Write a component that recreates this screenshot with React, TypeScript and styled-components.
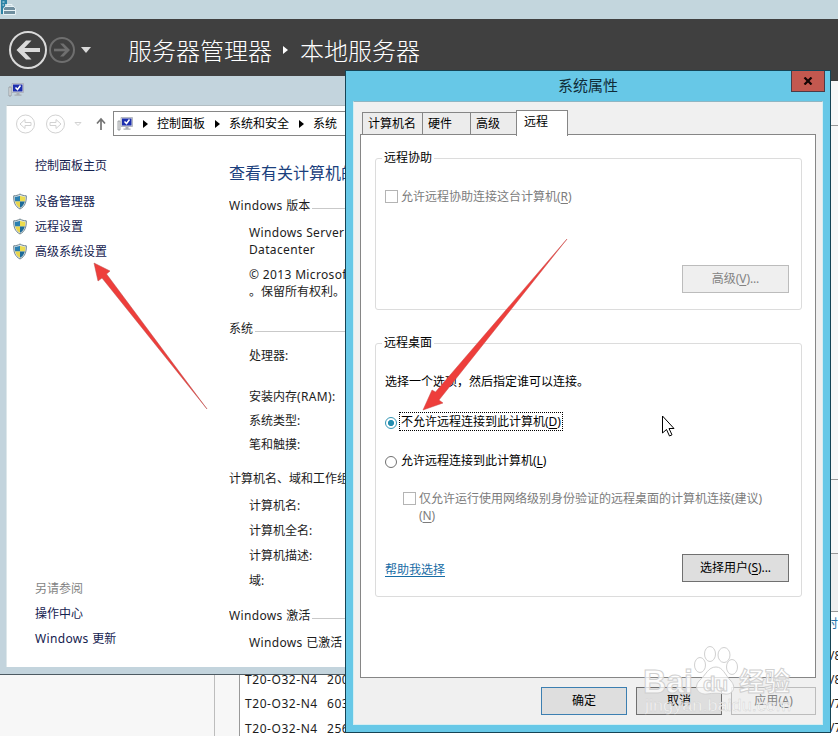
import React from "react";
import styled, { createGlobalStyle, css } from "styled-components";

const Global = createGlobalStyle`
  * { box-sizing: border-box; }
  html, body { margin: 0; padding: 0; overflow: hidden; }
  body { font: 12px/16px "Noto Sans", "Noto Sans CJK SC", sans-serif; color: #1c1c1c; }
  button { font: inherit; }
`;

const Desktop = styled.div`
  position: relative;
  width: 838px;
  height: 736px;
  overflow: hidden;
  background: #fff;
`;

/* Server manager */
const Manager = styled.div`
  display: flex;
  flex-direction: column;
  height: 100%;
`;
const ManagerTitle = styled.div`
  height: 19px;
  flex: none;
  background: #c3d6dd;
`;
const ManagerNav = styled.div`
  height: 62px;
  flex: none;
  background: #404040;
  display: flex;
  align-items: flex-start;
  color: #fff;
`;
const NavIcons = styled.svg`
  width: 128px;
  height: 62px;
  display: block;
`;
const Crumb = styled.div`
  display: flex;
  align-items: center;
  height: 62px;
  font: 300 24px/32px "Noto Sans CJK SC", sans-serif;
  svg { margin: 0 11px 1px 11px; }
`;
const ManagerBody = styled.div`
  flex: 1;
  display: grid;
  grid-template-columns: 215px 24px 1fr 16px;
`;
const NavPane = styled.div`
  background: #f7f7f7;
  border-right: 1px solid #bdbdbd;
`;
const Gutter = styled.div`
  background: #f7f7f7;
`;
const EventTable = styled.div`
  border-left: 1px solid #999;
  padding: 587px 0 0 5px;
  overflow: hidden;
  height: 655px;
`;
const EventRow = styled.div`
  display: grid;
  grid-template-columns: 82px 60px;
  height: 24.3px;
  line-height: 24px;
  letter-spacing: 0.55px;
  white-space: nowrap;
`;
const EdgeColumn = styled.div`
  display: flex;
  flex-direction: column;
  overflow: hidden;
  height: 655px;
`;
const EdgePanel = styled.div<{ $h: number; $bg: string }>`
  height: ${(p) => p.$h}px;
  flex: none;
  background: ${(p) => p.$bg};
  border-bottom: 1px solid #999;
`;
const EdgeText = styled.div<{ $link?: boolean }>`
  height: ${(p) => (p.$link ? 32 : 24)}px;
  flex: none;
  line-height: 24px;
  padding-left: ${(p) => (p.$link ? 4 : 8)}px;
  white-space: nowrap;
  color: ${(p) => (p.$link ? "#2372a8" : "#1c1c1c")};
`;

/* Control panel window */
const Panel = styled.section`
  position: absolute;
  left: 0;
  top: 76px;
  width: 346px;
  height: 599px;
  background: #c3d4dd;
  border-bottom: 1px solid #4d5a62;
  padding: 0 0 7px 6px;
  display: flex;
  flex-direction: column;
`;
const PanelTitle = styled.div`
  height: 29px;
  flex: none;
  padding: 6px 0 0 2px;
`;
const PanelClient = styled.div`
  flex: 1;
  background: #fff;
  border-top: 1px solid #b3bec3;
  border-left: 1px solid #dde7ea;
  display: flex;
  flex-direction: column;
  min-height: 0;
`;
const AddressRow = styled.div`
  display: flex;
  height: 31px;
  flex: none;
  padding-top: 5px;
`;
const AddressNav = styled.svg`
  width: 106px;
  height: 26px;
  flex: none;
`;
const Address = styled.div`
  flex: 1;
  height: 25px;
  border: 1px solid #868686;
  border-right: 0;
  display: flex;
  align-items: center;
  padding-left: 3px;
  white-space: nowrap;
  overflow: hidden;
  color: #000;
  svg { flex: none; }
`;
const Seg = styled.span`
  line-height: 23px;
`;
const Sep = styled.svg`
  width: 5px;
  height: 8px;
  margin: 0 9px 0 10px;
  &:first-of-type { margin-left: 8px; }
`;
const Columns = styled.div`
  flex: 1;
  display: grid;
  grid-template-columns: 222px 1fr;
  min-height: 0;
`;
const Side = styled.nav`
  padding: 21px 0 0 28px;
`;
const SideLink = styled.div<{ $mt?: number; $muted?: boolean }>`
  height: 16px;
  margin-top: ${(p) => p.$mt ?? 9}px;
  display: flex;
  align-items: center;
  white-space: pre;
  color: ${(p) => (p.$muted ? "#838383" : "#15224f")};
`;
const Latin = styled.span`
  letter-spacing: 0.35px;
`;
const ShieldSvg = styled.svg`
  width: 16px;
  height: 17px;
  margin: -2px 7px 0 -23px;
`;
const Info = styled.div`
  padding-top: 24px;
  overflow: hidden;
`;
const Heading = styled.h1`
  margin: 0;
  font-size: 16px;
  line-height: 24px;
  font-weight: 400;
  color: #1b3f7d;
  white-space: nowrap;
`;
const Section = styled.div<{ $mt: number }>`
  display: flex;
  align-items: center;
  height: 16px;
  margin-top: ${(p) => p.$mt}px;
  white-space: pre;
  &::after {
    content: "";
    flex: 1;
    height: 1px;
    margin: 5px 0 0 2px;
    background: #c9c9c9;
  }
`;
const Item = styled.div<{ $mt: number }>`
  height: 16px;
  margin-top: ${(p) => p.$mt}px;
  padding-left: 20px;
  white-space: nowrap;
`;

/* System properties dialog */
const Dialog = styled.section`
  position: absolute;
  left: 345px;
  top: 70px;
  width: 486px;
  height: 663px;
  background: #67c8e7;
  border: 1px solid #164455;
  display: flex;
  flex-direction: column;
  padding: 0 7px 7px;
`;
const DialogTitle = styled.header`
  position: relative;
  height: 30px;
  flex: none;
  text-align: center;
  font-size: 15px;
  line-height: 29px;
  color: #102c38;
`;
const Close = styled.button`
  position: absolute;
  right: -2px;
  top: 0;
  width: 34px;
  height: 21px;
  border: 1px solid #4c3b47;
  border-top: 0;
  background: #c3584f;
  padding: 0;
  display: grid;
  place-items: center;
`;
const DialogBody = styled.div`
  flex: 1;
  background: #f0f0f0;
  border: 1px solid #d4eef2;
  border-top-color: #8fb6c3;
  padding: 8px 6px 0 6px;
  display: flex;
  flex-direction: column;
`;
const Tabs = styled.div`
  display: flex;
  align-items: flex-end;
  height: 25px;
  padding-left: 2px;
  margin-bottom: -1px;
  color: #000;
`;
const Tab = styled.div<{ $w: number; $active?: boolean }>`
  width: ${(p) => p.$w}px;
  height: 23px;
  line-height: 22px;
  padding-left: 5px;
  border: 1px solid #868686;
  margin-right: -1px;
  background: #ececec;
  white-space: nowrap;
  ${(p) =>
    p.$active &&
    css`
      height: 26px;
      margin-bottom: -1px;
      padding-left: 7px;
      background: #fff;
      border-bottom: 0;
      position: relative;
      z-index: 1;
    `}
`;
const Page = styled.div`
  height: 544px;
  flex: none;
  border: 1px solid #868686;
  background: #fff;
  padding: 15px 13px 0 14px;
  color: #000;
`;
const Group = styled.fieldset<{ $h: number; $mt?: number }>`
  margin: ${(p) => p.$mt ?? 0}px 0 0;
  padding: 0 12px 0 9px;
  min-width: 0;
  height: ${(p) => p.$h}px;
  border: 1px solid #dcdcdc;
  border-radius: 3px;
`;
const Legend = styled.legend`
  padding: 0 2px;
  margin-left: -3px;
  height: 16px;
`;
const Option = styled.div<{ $mt: number; $indent?: number; $muted?: boolean }>`
  display: flex;
  align-items: flex-start;
  margin-top: ${(p) => p.$mt}px;
  padding-left: ${(p) => p.$indent ?? 0}px;
  line-height: 17px;
  color: ${(p) => (p.$muted ? "#7c7c7c" : "#000")};
  white-space: nowrap;
`;
const Check = styled.span`
  width: 13px;
  height: 13px;
  flex: none;
  border: 1px solid #b4b4b4;
  margin: 2px 3px 0 0;
`;
const Radio = styled.span<{ $on?: boolean }>`
  width: 12px;
  height: 12px;
  flex: none;
  border-radius: 50%;
  border: 1px solid ${(p) => (p.$on ? "#3596b5" : "#707070")};
  background: ${(p) =>
    p.$on ? "radial-gradient(circle, #258eb0 0 2.7px, #fff 3.5px)" : "#fff"};
  margin: 4px 3px 0 0;
`;
const OptionLabel = styled.span<{ $focus?: boolean }>`
  padding: 0 1px;
  outline: ${(p) => (p.$focus ? "1px dotted #000" : "none")};
`;
const Key = styled.span`
  letter-spacing: -0.1px;
  u { text-underline-offset: 2px; }
`;
const Hint = styled.div`
  margin-top: 23px;
  height: 16px;
`;
const Foot = styled.div<{ $mt: number }>`
  display: flex;
  justify-content: space-between;
  align-items: center;
  margin-top: ${(p) => p.$mt}px;
`;
const Help = styled.a`
  color: #176ca5;
  padding-top: 3px;
  text-decoration: underline;
  text-underline-offset: 2px;
`;
const Button = styled.button<{ $w: number; $tone?: "primary" | "disabled" }>`
  width: ${(p) => p.$w}px;
  height: 28px;
  padding: 0 0 1px;
  border: 1px solid
    ${(p) => (p.$tone === "primary" ? "#3c7fb1" : p.$tone === "disabled" ? "#bcbcbc" : "#707070")};
  background: ${(p) => (p.$tone === "disabled" ? "#efefef" : "#dedede")};
  color: ${(p) => (p.$tone === "disabled" ? "#838383" : "#000")};
`;
const Actions = styled.div`
  display: flex;
  justify-content: flex-end;
  gap: 9px;
  margin-top: 9px;
`;

/* Annotations drawn above the windows */
const Overlay = styled.svg`
  position: absolute;
  inset: 0;
  pointer-events: none;
`;

const Computer = () => (
  <svg width="16" height="16" viewBox="0 0 16 16">
    <path d="M1 5h2v9H1z" fill="#eee" stroke="#8a8f96" strokeWidth=".8" />
    <path d="M4 1.5h11.5v9H4z" fill="#d8dae0" stroke="#a7abb5" strokeWidth=".8" />
    <path d="M5 2.5h9.500v7H5z" fill="#1c2fae" />
    <path d="M7.500 5.500l2 2 3-4" fill="none" stroke="#fff" strokeWidth="1.500" />
    <path d="M8.500 11h3v1.500h2v1.300H6.500v-1.300h2z" fill="#a9adb3" />
  </svg>
);

const Shield = () => (
  <ShieldSvg viewBox="0 0 16 17">
    <path d="M8 1c2 1.300 4 1.700 6.300 1.800C14.500 9 13 13.500 8 16 3 13.500 1.500 9 1.700 2.800 4 2.700 6 2.300 8 1z" fill="#e0e7ea" stroke="#70858f" />
    <path d="M8 2.800v5.700H3.200c-.4-1.500-.5-3-.4-4.700C4.700 3.700 6.500 3.500 8 2.800z" fill="#2a7fb0" />
    <path d="M8 2.800v5.700h4.800c.4-1.500.5-3 .4-4.700C11.300 3.700 9.500 3.500 8 2.800z" fill="#ecdc4e" />
    <path d="M8 8.500H3.200c.8 3 2.300 5 4.800 6.300z" fill="#e9d54a" />
    <path d="M8 8.500h4.800c-.8 3-2.300 5-4.800 6.300z" fill="#1d6a98" />
  </ShieldSvg>
);

const Arrow = () => (
  <Sep viewBox="0 0 5 8">
    <path d="M0 0l5 4-5 4z" fill="#000" />
  </Sep>
);

const Mn = ({ k, dots }: { k: string; dots?: boolean }) => (
  <Key>
    (<u>{k}</u>){dots && "..."}
  </Key>
);

const events = [
  ["T20-O32-N4", "2003"],
  ["T20-O32-N4", "6038"],
  ["T20-O32-N4", "2561"],
];
const edgeDates = ["/8", "/8", "/7", "/7"];

export default function App() {
  return (
    <Desktop>
      <Global />
      <Manager>
        <ManagerTitle>
          <svg width="17" height="16" viewBox="0 0 17 16">
            <path d="M0 0h7v4H5v10H1V0z" fill="#2b83a5" />
            <path d="M2.500 2h2M2.500 5h1.500" stroke="#d9f0f5" />
            <path d="M3.500 8.500l1.500-2h9l1.500 2v6h-12z" fill="#6f8f9f" stroke="#e8f3f6" />
            <path d="M7 6.500V4.500h5v2M4 10.500h11" fill="none" stroke="#e8f3f6" />
          </svg>
        </ManagerTitle>
        <ManagerNav>
          <NavIcons viewBox="0 0 128 62">
            <circle cx="28" cy="31" r="18" fill="none" stroke="#dadada" strokeWidth="2" />
            <path d="M40 31H20" fill="none" stroke="#dadada" strokeWidth="4" />
            <path d="M26 21.500h5.500L22.500 31l9 9.500H26L16.500 31z" fill="#dadada" />
            <circle cx="62" cy="31" r="12" fill="none" stroke="#6f6f6f" strokeWidth="2" />
            <path d="M54 31h13" fill="none" stroke="#6f6f6f" strokeWidth="2.600" />
            <path d="M63.500 24.500H60l6 6.500-6 6.500h3.500l6.500-6.500z" fill="#6f6f6f" />
            <path d="M81 28h10l-5 6z" fill="#dadada" />
          </NavIcons>
          <Crumb>
            服务器管理器
            <svg width="6" height="8" viewBox="0 0 6 8">
              <path d="M0 0l5 4-5 4z" fill="#fff" />
            </svg>
            本地服务器
          </Crumb>
        </ManagerNav>
        <ManagerBody>
          <NavPane />
          <Gutter />
          <EventTable>
            {events.map(([name, id]) => (
              <EventRow key={id}>
                <span>{name}</span>
                <span>{id}</span>
              </EventRow>
            ))}
          </EventTable>
          <EdgeColumn>
            <EdgePanel $h={45} $bg="#f7f7f7" />
            <EdgePanel $h={354} $bg="#f7f7f7" />
            <EdgePanel $h={74} $bg="#f7f7f7" />
            <EdgePanel $h={58} $bg="#efefef" />
            <EdgeText $link>时</EdgeText>
            {edgeDates.map((d, i) => (
              <EdgeText key={i}>{d}</EdgeText>
            ))}
          </EdgeColumn>
        </ManagerBody>
      </Manager>

      <Panel>
        <PanelTitle>
          <Computer />
        </PanelTitle>
        <PanelClient>
          <AddressRow>
            <AddressNav viewBox="0 0 106 26">
              <g fill="none" stroke="#d2d2d2">
                <circle cx="18.500" cy="13" r="9" />
                <path d="M24 11.500h-6v-3l-5 4.500 5 4.500v-3h6z" />
                <circle cx="48.500" cy="13" r="9" />
                <path d="M43 11.500h6v-3l5 4.500-5 4.500v-3h-6z" />
                <path d="M68 11.500h6l-3 3z" />
                <path d="M94 19V9M90 12.500L94 8l4 4.500" stroke="#737373" strokeWidth="1.700" />
              </g>
            </AddressNav>
            <Address>
              <Computer />
              <Arrow />
              <Seg>控制面板</Seg>
              <Arrow />
              <Seg>系统和安全</Seg>
              <Arrow />
              <Seg>系统</Seg>
            </Address>
          </AddressRow>
          <Columns>
            <Side>
              <SideLink $mt={0}>控制面板主页</SideLink>
              <SideLink $mt={20}><Shield />设备管理器</SideLink>
              <SideLink><Shield />远程设置</SideLink>
              <SideLink><Shield />高级系统设置</SideLink>
              <SideLink $mt={321} $muted>另请参阅</SideLink>
              <SideLink>操作中心</SideLink>
              <SideLink><Latin>Windows </Latin>更新</SideLink>
            </Side>
            <Info>
              <Heading>查看有关计算机的基本信息</Heading>
              <Section $mt={13}><Latin>Windows </Latin>版本</Section>
              <Item $mt={11}><Latin>Windows Server</Latin></Item>
              <Item $mt={1}><Latin>Datacenter</Latin></Item>
              <Item $mt={9}><Latin>© 2013 Microsoft</Latin></Item>
              <Item $mt={1}>。保留所有权利。</Item>
              <Section $mt={21}>系统</Section>
              <Item $mt={11}>处理器:</Item>
              <Item $mt={25}>安装内存<Latin>(RAM):</Latin></Item>
              <Item $mt={8}>系统类型:</Item>
              <Item $mt={8}>笔和触摸:</Item>
              <Section $mt={18}>计算机名、域和工作组设置</Section>
              <Item $mt={11}>计算机名:</Item>
              <Item $mt={9}>计算机全名:</Item>
              <Item $mt={9}>计算机描述:</Item>
              <Item $mt={9}>域:</Item>
              <Section $mt={19}><Latin>Windows </Latin>激活</Section>
              <Item $mt={11}><Latin>Windows </Latin>已激活</Item>
            </Info>
          </Columns>
        </PanelClient>
      </Panel>

      <Dialog>
        <DialogTitle>
          系统属性
          <Close aria-label="关闭">
            <svg width="10" height="8" viewBox="0 0 10 8">
              <path d="M1.500 .5l7 7M8.500 .5l-7 7" stroke="#150505" strokeWidth="2.200" />
            </svg>
          </Close>
        </DialogTitle>
        <DialogBody>
          <Tabs>
            <Tab $w={61}>计算机名</Tab>
            <Tab $w={49}>硬件</Tab>
            <Tab $w={47}>高级</Tab>
            <Tab $w={52} $active>远程</Tab>
          </Tabs>
          <Page>
            <Group $h={160}>
              <Legend>远程协助</Legend>
              <Option $mt={22} $muted>
                <Check />
                <span>允许远程协助连接这台计算机<Mn k="R" /></span>
              </Option>
              <Foot $mt={60}>
                <span />
                <Button $w={107} $tone="disabled">高级<Mn k="V" dots /></Button>
              </Foot>
            </Group>
            <Group $h={262} $mt={25}>
              <Legend>远程桌面</Legend>
              <Hint>选择一个选项，然后指定谁可以连接。</Hint>
              <Option $mt={23}>
                <Radio $on />
                <OptionLabel $focus>不允许远程连接到此计算机<Mn k="D" /></OptionLabel>
              </Option>
              <Option $mt={22}>
                <Radio />
                <OptionLabel>允许远程连接到此计算机<Mn k="L" /></OptionLabel>
              </Option>
              <Option $mt={21} $indent={18} $muted>
                <Check />
                <span>
                  仅允许运行使用网络级别身份验证的远程桌面的计算机连接(建议)
                  <br />
                  <Mn k="N" />
                </span>
              </Option>
              <Foot $mt={30}>
                <Help>帮助我选择</Help>
                <Button $w={107}>选择用户<Mn k="S" dots /></Button>
              </Foot>
            </Group>
          </Page>
          <Actions>
            <Button $w={86} $tone="primary">确定</Button>
            <Button $w={86}>取消</Button>
            <Button $w={85} $tone="disabled">应用<Mn k="A" /></Button>
          </Actions>
        </DialogBody>
      </Dialog>

      <Overlay width="838" height="736" viewBox="0 0 838 736">
        <path d="M94 263l16 8-3.500 3L207 409 102 278l-4 3z" fill="#ee3e3b" stroke="#b94a48" strokeWidth=".5" />
        <path d="M567 239L439 400l4 3-20 7 9-20 3.500 2z" fill="#ee3e3b" stroke="#c94a48" strokeWidth=".5" />
        <path d="M662.500 416v17l4-3.500 3 6.500 2.500-1.200-3-6.300h5z" fill="#fff" stroke="#000" />
        <g fill="#fff" fillOpacity=".75" stroke="#d0d0d0" strokeWidth="1">
          <ellipse cx="700" cy="665" rx="5.500" ry="7.500" />
          <ellipse cx="710" cy="654" rx="5.500" ry="7.500" />
          <ellipse cx="724" cy="655" rx="6" ry="7.500" />
          <ellipse cx="732" cy="667" rx="5.500" ry="7.500" />
          <path d="M716 667c7 0 9 8 15 14 6 7 1 14-6 13-6-1-12-1-18 0-8 1-14-6-8-13 7-6 9-14 17-14z" />
          <g fontFamily="'Liberation Sans', sans-serif" fontWeight="700">
            <text x="643" y="693" fontSize="33" textLength="50" lengthAdjust="spacingAndGlyphs">Bai</text>
            <text x="703" y="691" fontSize="20" textLength="25" lengthAdjust="spacingAndGlyphs">du</text>
            <text x="739" y="691" fontSize="26" fontFamily="'Noto Sans CJK SC', sans-serif" textLength="51" lengthAdjust="spacingAndGlyphs">经验</text>
          </g>
          <text x="645" y="711" fontSize="17" fontFamily="'Liberation Sans', sans-serif" strokeWidth=".4" textLength="146" lengthAdjust="spacingAndGlyphs">jingyan.baidu.com</text>
        </g>
      </Overlay>
    </Desktop>
  );
}
